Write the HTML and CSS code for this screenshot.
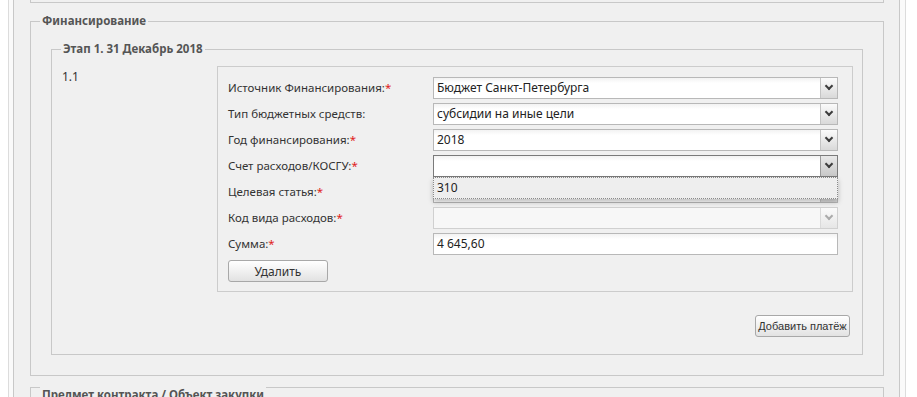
FILE: index.html
```html
<!DOCTYPE html>
<html>
  <head>
    <meta charset="utf-8">
    <title>Финансирование</title>
    <link rel="stylesheet" href="styles.css">
  </head>
  <body>
    <div class="shell">
      <div class="content">
        <div class="prev-box"></div>

        <fieldset class="group">
          <legend>Финансирование</legend>
          <div class="group-body">

            <fieldset class="group stage">
              <legend>Этап 1. 31 Декабрь 2018</legend>
              <div class="stage-body">
                <div class="stage-row">
                  <div class="num">1.1</div>
                  <div class="panel">
                    <div class="form-row">
                      <label>Источник Финансирования:<span class="req">*</span></label>
                      <div class="combo"><span class="val">Бюджет Санкт-Петербурга</span><span class="trigger"></span></div>
                    </div>
                    <div class="form-row">
                      <label>Тип бюджетных средств:</label>
                      <div class="combo"><span class="val">субсидии на иные цели</span><span class="trigger"></span></div>
                    </div>
                    <div class="form-row">
                      <label>Год финансирования:<span class="req">*</span></label>
                      <div class="combo"><span class="val">2018</span><span class="trigger"></span></div>
                    </div>
                    <div class="form-row">
                      <label>Счет расходов/КОСГУ:<span class="req">*</span></label>
                      <div class="combo focused">
                        <span class="val"></span><span class="trigger"></span>
                        <div class="dropdown"><div class="item">310</div></div>
                      </div>
                    </div>
                    <div class="form-row">
                      <label>Целевая статья:<span class="req">*</span></label>
                      <div class="combo"><span class="val"></span><span class="trigger"></span></div>
                    </div>
                    <div class="form-row">
                      <label>Код вида расходов:<span class="req">*</span></label>
                      <div class="combo disabled"><span class="val"></span><span class="trigger"></span></div>
                    </div>
                    <div class="form-row">
                      <label>Сумма:<span class="req">*</span></label>
                      <div class="text-field">4 645,60</div>
                    </div>
                    <button class="btn btn-delete">Удалить</button>
                  </div>
                </div>
                <div class="actions">
                  <button class="btn btn-add">Добавить платёж</button>
                </div>
              </div>
            </fieldset>

          </div>
        </fieldset>

        <fieldset class="group next">
          <legend>Предмет контракта / Объект закупки</legend>
        </fieldset>
      </div>
    </div>
  </body>
</html>
```

FILE: styles.css
```css
html, body {
  margin: 0;
  padding: 0;
  background: #ffffff;
  font-family: "Noto Sans", "DejaVu Sans", sans-serif;
  font-size: 12px;
  color: #333333;
  overflow: hidden;
}

/* outer frame: two thin borders on both sides */
.shell {
  margin-left: 8px;
  width: 887px;
  height: 397px;
  border-left: 1px solid #dcdcdc;
  border-right: 1px solid #dcdcdc;
  padding: 0 5px 0 4px;
  background: #fafafa;
}

.content {
  height: 397px;
  background: #f0f0f0;
  border-left: 1px solid #c8c8c8;
  border-right: 1px solid #c8c8c8;
  padding: 0 15px 0 16px;
}

.prev-box {
  height: 2px;
  border: 1px solid #c8c8c8;
  border-top: none;
}

.group {
  margin: 11px 0 0 0;
  padding: 0;
  border: 1px solid #c8c8c8;
  min-width: 0;
}

.group legend {
  padding: 0 2px;
  margin-left: 9px;
  font-size: 11.5px;
  font-weight: bold;
  color: #555555;
  line-height: 14px;
}

.group-body {
  padding: 14px 20px 20px 20px;
}

.group-body .group {
  margin: 0;
}

.stage-body {
  padding: 10px 9px 17px 10px;
}

.stage-row {
  display: flex;
}

.num {
  width: 155px;
  padding-top: 4px;
  line-height: 14px;
}

.panel {
  flex: 1;
  border: 1px solid #cccccc;
  background: #f0f0f0;
  padding: 10px 14px 9px 10px;
}

.form-row {
  display: flex;
  align-items: center;
  height: 22px;
  margin-bottom: 4px;
}

.form-row label {
  width: 205px;
  font-size: 11.5px;
  line-height: 14px;
  color: #333333;
}

.req {
  color: #e02020;
}

.combo, .text-field {
  position: relative;
  flex: 1;
  height: 20px;
  border: 1px solid #b8b8b8;
  background: linear-gradient(#f2f2f2, #ffffff 5px);
  display: flex;
}

.combo .val, .text-field {
  line-height: 20px;
  padding-left: 3px;
  color: #222222;
}

.combo .val {
  flex: 1;
}

.combo .trigger {
  width: 16px;
  border-left: 1px solid #c4c4c4;
  background: linear-gradient(#fbfbfb, #d9d9d9);
  position: relative;
}

.combo .trigger::after {
  content: "";
  position: absolute;
  left: 5px;
  top: 5px;
  width: 4px;
  height: 4px;
  border-right: 2px solid #3c3c3c;
  border-bottom: 2px solid #3c3c3c;
  transform: rotate(45deg);
}

.combo.focused {
  border-color: #7a7a7a;
}

.combo.focused .trigger {
  border-left-color: #9a9a9a;
  background: linear-gradient(#e8e8e8, #c8c8c8);
}

.combo.disabled {
  border-color: #d0d0d0;
  background: #f7f7f7;
}

.combo.disabled .trigger {
  border-left-color: #dadada;
  background: linear-gradient(#fafafa, #e6e6e6);
}

.combo.disabled .trigger::after {
  border-color: #aaaaaa;
}

.dropdown {
  position: absolute;
  left: -1px;
  right: -1px;
  top: 21px;
  height: 20px;
  border: 1px dotted #8a8a8a;
  background: #eeeeee;
  box-shadow: 0 3px 5px rgba(0, 0, 0, 0.25);
  z-index: 5;
}

.dropdown .item {
  line-height: 20px;
  padding-left: 3px;
  color: #222222;
}

.btn {
  font-family: "Noto Sans", "DejaVu Sans", sans-serif;
  font-size: 12px;
  color: #333333;
  border: 1px solid #a8a8a8;
  border-radius: 3px;
  background: linear-gradient(#ffffff, #e2e2e2);
  height: 22px;
  padding: 0;
  cursor: pointer;
  white-space: nowrap;
}

.btn-delete {
  width: 100px;
  margin-top: 1px;
}

.actions {
  display: flex;
  justify-content: flex-end;
  margin-top: 23px;
  padding-right: 3px;
}

.btn-add {
  font-family: "Liberation Sans", Arial, sans-serif;
  font-size: 11px;
  padding: 0 2px;
  width: 95px;
}

.next {
  margin-top: -4px;
  height: 30px;
}

.next legend {
  padding-top: 16px;
}
```
